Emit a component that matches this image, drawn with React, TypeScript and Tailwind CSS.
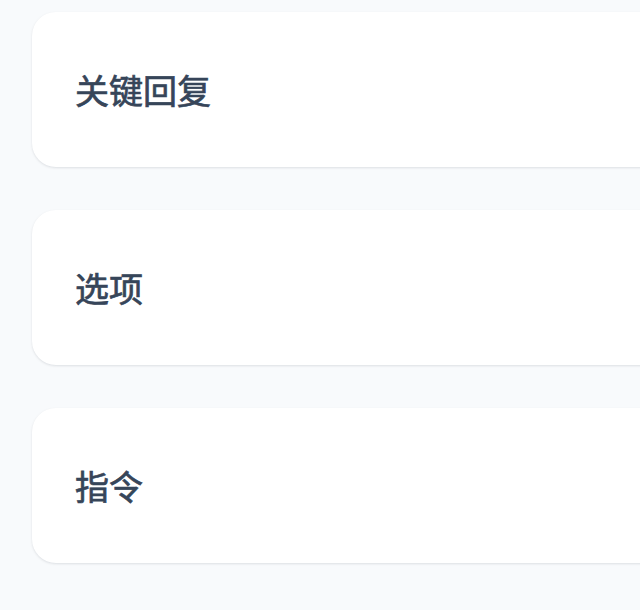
const ITEMS = ["关键回复", "选项", "指令"];

export default function App() {
  return (
    <div className="h-[610px] w-full overflow-hidden bg-[#f8fafc] pl-8 pt-3">
      <div className="flex w-[700px] flex-col gap-[43px]">
        {ITEMS.map((label) => (
          <div
            key={label}
            className="flex h-[155px] items-center rounded-3xl bg-white pl-[43px] shadow-[0_1px_3px_rgba(15,23,42,0.08),0_1px_2px_rgba(15,23,42,0.04)]"
          >
            <span
              className="text-[34px] font-normal text-[#364559] [-webkit-text-stroke:0.7px_#364559]"
              style={{ fontFamily: '"Noto Sans CJK SC", "Noto Sans", sans-serif' }}
            >
              {label}
            </span>
          </div>
        ))}
      </div>
    </div>
  );
}
